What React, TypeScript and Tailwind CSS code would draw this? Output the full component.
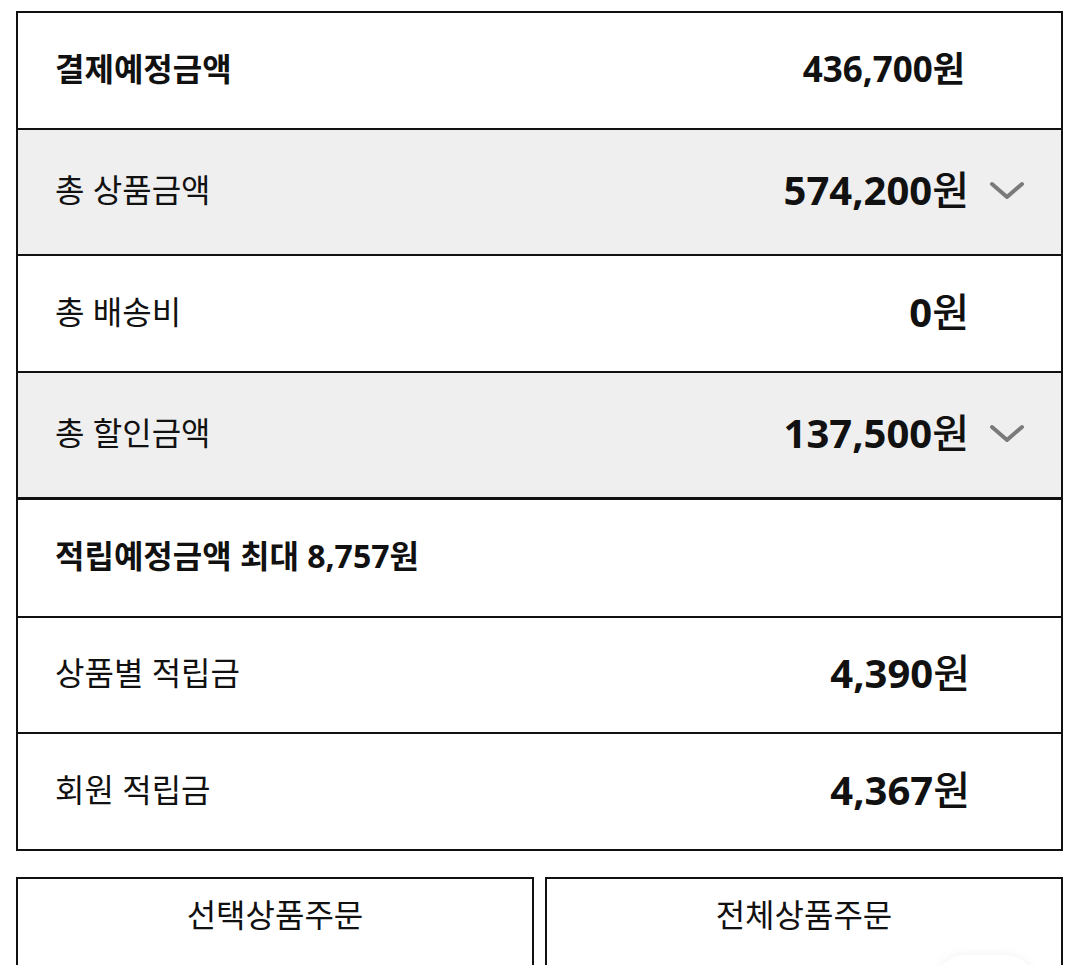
import React from 'react'

const font = { fontFamily: '"Noto Sans", "Noto Sans CJK KR", sans-serif' }

function Chevron() {
  return (
    <svg width="36" height="20" viewBox="0 0 36 20" fill="none" className="shrink-0">
      <polyline points="3,3 18,16 33,3" stroke="#7a7a7a" strokeWidth="4" strokeLinecap="round" strokeLinejoin="round" />
    </svg>
  )
}

function Amount({ value }: { value: string }) {
  return (
    <span className="text-[40px] leading-none text-[#111]">
      <span className="font-bold">{value}</span>
      <span className="font-medium">원</span>
    </span>
  )
}

interface Row {
  label: string
  value: string
  gray?: boolean
  chevron?: boolean
  h: string
  border: string
}

const rows: Row[] = [
  { label: '총 상품금액', value: '574,200', gray: true, chevron: true, h: 'h-[126px]', border: 'border-b-2' },
  { label: '총 배송비', value: '0', h: 'h-[117px]', border: 'border-b-2' },
  { label: '총 할인금액', value: '137,500', gray: true, chevron: true, h: 'h-[127px]', border: 'border-b-[3px]' },
]

const points: Row[] = [
  { label: '상품별 적립금', value: '4,390', h: 'h-[116px]', border: 'border-b-2' },
  { label: '회원 적립금', value: '4,367', h: 'h-[115px]', border: '' },
]

export default function App() {
  return (
    <div className="relative min-h-screen bg-white px-4 pt-[11px] text-[#111]" style={font}>
      <div className="border-2 border-[#111]">
        <div className="flex h-[117px] items-center justify-between border-b-2 border-[#111] pb-[4px] pl-[37px] pr-[96px]">
          <span className="text-[32px] font-bold">결제예정금액</span>
          <span className="text-[35px] font-bold leading-none">436,700원</span>
        </div>

        {rows.map(r => (
          <div
            key={r.label}
            className={`flex ${r.h} items-center justify-between ${r.border} border-[#111] pb-[4px] pl-[37px] pr-[36px] ${r.gray ? 'bg-[#efefef]' : 'bg-white'}`}>
            <span className="text-[32px]">{r.label}</span>
            <div className="flex items-center gap-[20px]">
              <Amount value={r.value} />
              <div className="w-[36px] pt-[2px]">{r.chevron && <Chevron />}</div>
            </div>
          </div>
        ))}

        <div className="flex h-[118px] items-center border-b-2 border-[#111] pb-[4px] pl-[37px]">
          <span className="text-[32px] font-bold">적립예정금액 최대 8,757원</span>
        </div>

        {points.map(r => (
          <div
            key={r.label}
            className={`flex ${r.h} items-center justify-between ${r.border} border-[#111] pb-[4px] pl-[37px] pr-[91px]`}>
            <span className="text-[32px]">{r.label}</span>
            <Amount value={r.value} />
          </div>
        ))}
      </div>

      <div className="mt-[26px] grid grid-cols-2 gap-[11px]">
        <button className="flex h-[110px] items-start justify-center border-2 border-[#111] bg-white pt-[12px] text-[32px] leading-[48px]">
          선택상품주문
        </button>
        <button className="flex h-[110px] items-start justify-center border-2 border-[#111] bg-white pt-[12px] text-[32px] leading-[48px]">
          전체상품주문
        </button>
      </div>

      <div className="absolute left-[935px] top-[955px] h-[60px] w-[100px] rounded-full bg-white shadow-[0_0_12px_rgba(0,0,0,0.06)]" />
    </div>
  )
}
